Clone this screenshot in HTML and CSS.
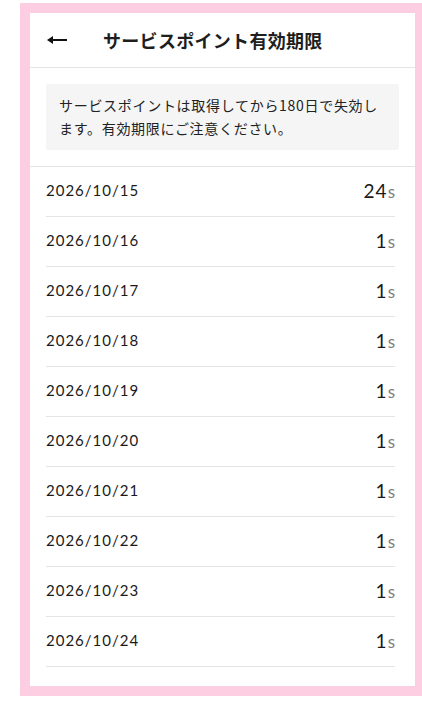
FILE: index.html
```html
<!DOCTYPE html>
<html lang="ja">
<head>
<meta charset="utf-8">
<title>サービスポイント有効期限</title>
<link rel="stylesheet" href="styles.css">
</head>
<body>
<div class="frame">
  <div class="screen">
    <header class="topbar">
      <span class="back" aria-label="戻る">
        <svg width="20" height="10" viewBox="0 0 20 10">
          <line x1="4" y1="5" x2="20" y2="5" stroke="#111" stroke-width="2"/>
          <polygon points="0,5 6,1 6,9" fill="#111"/>
        </svg>
      </span>
      <h1 class="title">サービスポイント有効期限</h1>
    </header>
    <section class="notice-wrap">
      <p class="notice">サービスポイントは取得してから180日で失効します。有効期限にご注意ください。</p>
    </section>
    <ul class="list">
      <li class="row"><span class="date">2026/10/15</span><span class="amount">24<small>s</small></span></li>
      <li class="row"><span class="date">2026/10/16</span><span class="amount">1<small>s</small></span></li>
      <li class="row"><span class="date">2026/10/17</span><span class="amount">1<small>s</small></span></li>
      <li class="row"><span class="date">2026/10/18</span><span class="amount">1<small>s</small></span></li>
      <li class="row"><span class="date">2026/10/19</span><span class="amount">1<small>s</small></span></li>
      <li class="row"><span class="date">2026/10/20</span><span class="amount">1<small>s</small></span></li>
      <li class="row"><span class="date">2026/10/21</span><span class="amount">1<small>s</small></span></li>
      <li class="row"><span class="date">2026/10/22</span><span class="amount">1<small>s</small></span></li>
      <li class="row"><span class="date">2026/10/23</span><span class="amount">1<small>s</small></span></li>
      <li class="row"><span class="date">2026/10/24</span><span class="amount">1<small>s</small></span></li>
    </ul>
  </div>
</div>
</body>
</html>
```
FILE: styles.css
```css
* { box-sizing: border-box; }

html, body {
  margin: 0;
  padding: 0;
  background: #fff;
  overflow: hidden;
}

body {
  font-family: Lato, "Noto Sans CJK JP", sans-serif;
  color: #222;
}

.frame {
  margin: 3px 0 14px 20px;
  width: 402px;
  border: 10px solid #fdcde2;
  border-right-width: 7px;
}

.screen {
  background: #fff;
}

.topbar {
  display: flex;
  align-items: center;
  height: 55px;
  padding-left: 17px;
  border-bottom: 1px solid #e4e4e4;
}

.back {
  display: flex;
  width: 20px;
  margin-right: 36px;
}

.title {
  margin: 0;
  font-family: "Noto Sans CJK JP", sans-serif;
  font-size: 18px;
  font-weight: 700;
  color: #1e1e1e;
  letter-spacing: 0.3px;
}

.notice-wrap {
  padding: 16px;
  border-bottom: 1px solid #e4e4e4;
}

.notice {
  margin: 0;
  background: #f5f5f5;
  border-radius: 2px;
  padding: 10px 13px;
  font-family: "Noto Sans CJK JP", sans-serif;
  font-size: 14px;
  line-height: 23px;
  letter-spacing: 0.7px;
  color: #222;
}

.list {
  list-style: none;
  margin: 0;
  padding: 0 20px 19px 16px;
}

.row {
  display: flex;
  justify-content: space-between;
  align-items: center;
  height: 50px;
  padding-bottom: 3px;
  border-bottom: 1px solid #e4e4e4;
}

.date {
  font-size: 15px;
  color: #1a1a1a;
  letter-spacing: 1px;
}

.amount {
  font-size: 19px;
  color: #1a1a1a;
  letter-spacing: 1px;
}

.amount small {
  font-size: 17px;
  color: #808080;
  letter-spacing: 0;
}
```
